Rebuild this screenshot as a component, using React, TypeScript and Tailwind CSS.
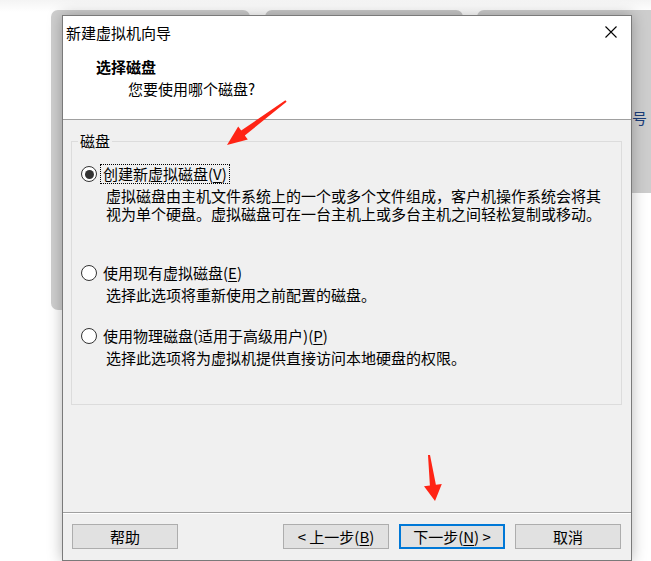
import React from "react";

const font = { fontFamily: '"Noto Sans CJK SC", "Noto Sans", sans-serif' };

type Option = {
  label: string;
  key: string;
  lines: string[];
  checked?: boolean;
  mt: string;
};

const options: Option[] = [
  {
    label: "创建新虚拟磁盘",
    key: "V",
    lines: [
      "虚拟磁盘由主机文件系统上的一个或多个文件组成，客户机操作系统会将其",
      "视为单个硬盘。虚拟磁盘可在一台主机上或多台主机之间轻松复制或移动。",
    ],
    checked: true,
    mt: "mt-[22px]",
  },
  {
    label: "使用现有虚拟磁盘",
    key: "E",
    lines: ["选择此选项将重新使用之前配置的磁盘。"],
    mt: "mt-[40px]",
  },
  {
    label: "使用物理磁盘(适用于高级用户)",
    key: "P",
    lines: ["选择此选项将为虚拟机提供直接访问本地硬盘的权限。"],
    mt: "mt-[22px]",
  },
];

function Radio({ checked }: { checked?: boolean }) {
  return (
    <span className="flex h-[16px] w-[16px] shrink-0 items-center justify-center rounded-full border border-[#333] bg-white">
      {checked && <span className="h-[9px] w-[9px] rounded-full bg-[#333]" />}
    </span>
  );
}

function DiskOption({ opt }: { opt: Option }) {
  return (
    <div className={opt.mt}>
      <div className="flex h-[20px] items-center pl-[9px]">
        <Radio checked={opt.checked} />
        <span
          className={
            "ml-[3px] flex h-[20px] items-center whitespace-nowrap px-[2px] leading-[20px] " +
            (opt.checked ? "border border-dotted border-black" : "border border-transparent")
          }
        >
          {opt.label}(<span className="underline underline-offset-2">{opt.key}</span>)
        </span>
      </div>
      <p className="mt-[3px] whitespace-nowrap pl-[34px] leading-[18px]">
        {opt.lines.map((l, i) => (
          <React.Fragment key={l}>
            {i > 0 && <br />}
            {l}
          </React.Fragment>
        ))}
      </p>
    </div>
  );
}

function WizButton({ children, primary }: { children: React.ReactNode; primary?: boolean }) {
  return (
    <button
      className={
        "flex h-[25px] w-[106px] items-center justify-center bg-[#e1e1e1] text-[15px] leading-none text-black " +
        (primary ? "border-2 border-[#0078d7]" : "border border-[#adadad]")
      }
    >
      {children}
    </button>
  );
}

function Arrows() {
  return (
    <svg className="pointer-events-none absolute left-0 top-0" width="651" height="561">
      <polygon
        points="285.4,100.2 241.2,130.6 238.2,126.6 227,145 247.8,139.4 244.8,135.4 286.6,101.8"
        fill="#ff2415"
      />
      <polygon
        points="428,455.1 429.9,485.5 424,486.3 435,501 441.8,484 435.9,484.7 430,454.9"
        fill="#ff2415"
      />
    </svg>
  );
}

export default function App() {
  return (
    <div className="relative h-[561px] w-[651px] overflow-hidden bg-white text-[15px] text-black" style={font}>
      {/* windows behind the dialog */}
      <div className="absolute left-0 top-0 h-[12px] w-[651px] bg-gradient-to-b from-[#f4f4f4] to-white" />
      <div className="absolute left-[51px] top-[10px] h-[300px] w-[199px] rounded-[7px] bg-[#cfcfcf]" />
      <div className="absolute left-[265px] top-[10px] h-[20px] w-[198px] rounded-t-[7px] bg-[#c9c9c9]" />
      <div className="absolute left-[477px] top-[10px] h-[183px] w-[190px] rounded-[7px] bg-[#cdcdcd]" />
      <div className="absolute left-[632px] top-[110px] text-[15px] leading-none text-[#1a3d7a]">号</div>

      {/* dialog */}
      <div className="absolute left-[62px] top-[15px] flex h-[546px] w-[570px] flex-col border border-[#7a7a7a] shadow-[0_0_14px_rgba(0,0,0,0.28)]">
        <div className="h-[103px] bg-white">
          <div className="flex h-[32px] items-center justify-between pl-[3px] pr-[14px]">
            <span className="leading-none">新建虚拟机向导</span>
            <svg width="12" height="12" viewBox="0 0 12 12">
              <path d="M0.5 0.5 L11.5 11.5 M11.5 0.5 L0.5 11.5" stroke="#000" strokeWidth="1.1" />
            </svg>
          </div>
          <div className="mt-[9px] pl-[33px] font-bold leading-[20px]">选择磁盘</div>
          <div className="mt-[2px] pl-[65px] leading-[20px]">您要使用哪个磁盘?</div>
        </div>
        <div className="h-px bg-[#a0a0a0]" />

        <div className="flex-1 bg-[#f0f0f0] pl-[8px] pr-[9px] pt-[21px]">
          <div className="relative h-[264px] border border-[#dcdcdc]">
            <span className="absolute left-[6px] top-[-11px] bg-[#f0f0f0] px-[2px] leading-[20px]">磁盘</span>
            {options.map((o) => (
              <DiskOption key={o.key} opt={o} />
            ))}
          </div>
        </div>

        <div className="h-px bg-[#a0a0a0]" />
        <div className="h-px bg-white" />
        <div className="flex h-[46px] items-start bg-[#f0f0f0] pl-[9px] pr-[10px] pt-[10px]">
          <WizButton>帮助</WizButton>
          <div className="flex-1" />
          <div className="flex gap-[10px]">
            <WizButton>
              &lt; 上一步(<span className="underline underline-offset-2">B</span>)
            </WizButton>
            <WizButton primary>
              下一步(<span className="underline underline-offset-2">N</span>) &gt;
            </WizButton>
            <WizButton>取消</WizButton>
          </div>
        </div>
      </div>

      <Arrows />
    </div>
  );
}
